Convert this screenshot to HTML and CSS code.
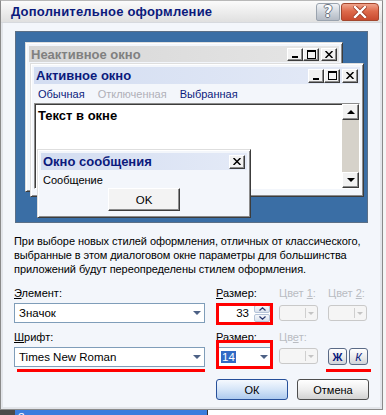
FILE: index.html
```html
<!DOCTYPE html>
<html lang="ru">
<head>
    <meta charset="UTF-8">
    <title>Дополнительное оформление</title>
    <link rel="stylesheet" href="styles.css">
</head>
<body>
    <div class="screen">
        <div class="dialog">
            <div class="titlebar">
                <span class="title">Дополнительное оформление</span>
                <div class="caption-btns">
                    <span class="cap-help">?</span>
                    <span class="cap-close">
                        <svg width="14" height="12" viewBox="0 0 14 12">
                            <path d="M2 1 L12 11 M12 1 L2 11" stroke="#9c3a25" stroke-width="4" stroke-linecap="square"/>
                            <path d="M2 1 L12 11 M12 1 L2 11" stroke="#fff" stroke-width="2.4" stroke-linecap="square"/>
                        </svg>
                    </span>
                </div>
            </div>

            <div class="content">
                <div class="preview">
                    <div class="win win-inactive">
                        <div class="wtitle">
                            <span>Неактивное окно</span>
                            <div class="wbtns">
                                <span class="cbtn"><svg width="8" height="8"><rect x="1" y="6" width="6" height="2" fill="#000"/></svg></span>
                                <span class="cbtn"><svg width="9" height="9"><rect x="0.5" y="0.5" width="8" height="8" fill="none" stroke="#000"/><rect x="0" y="1" width="9" height="1" fill="#000"/></svg></span>
                                <span class="cbtn close"><svg width="8" height="7"><path d="M0.5 0 L7.5 7 M7.5 0 L0.5 7" stroke="#000" stroke-width="1.5"/></svg></span>
                            </div>
                        </div>
                    </div>

                    <div class="win win-active">
                        <div class="wtitle">
                            <span>Активное окно</span>
                            <div class="wbtns">
                                <span class="cbtn"><svg width="8" height="8"><rect x="1" y="6" width="6" height="2" fill="#000"/></svg></span>
                                <span class="cbtn"><svg width="9" height="9"><rect x="0.5" y="0.5" width="8" height="8" fill="none" stroke="#000"/><rect x="0" y="1" width="9" height="1" fill="#000"/></svg></span>
                                <span class="cbtn close"><svg width="8" height="7"><path d="M0.5 0 L7.5 7 M7.5 0 L0.5 7" stroke="#000" stroke-width="1.5"/></svg></span>
                            </div>
                        </div>
                        <div class="menu">
                            <span>Обычная</span>
                            <span class="disabled">Отключенная</span>
                            <span>Выбранная</span>
                        </div>
                        <div class="client">
                            <div class="client-text">Текст в окне</div>
                            <div class="vscroll">
                                <span class="sbtn"><i class="tri up"></i></span>
                                <span class="track"></span>
                                <span class="sbtn"><i class="tri down"></i></span>
                            </div>
                        </div>
                    </div>

                    <div class="win win-msg">
                        <div class="wtitle">
                            <span>Окно сообщения</span>
                            <div class="wbtns">
                                <span class="cbtn close"><svg width="8" height="7"><path d="M0.5 0 L7.5 7 M7.5 0 L0.5 7" stroke="#000" stroke-width="1.5"/></svg></span>
                            </div>
                        </div>
                        <div class="msg-body">
                            <div class="msg-text">Сообщение</div>
                            <span class="classic-btn">OK</span>
                        </div>
                    </div>
                </div>

                <p class="note">
                    При выборе новых стилей оформления, отличных от классического,
                    выбранные в этом диалоговом окне параметры для большинства
                    приложений будут переопределены стилем оформления.
                </p>

                <div class="form">
                    <span class="lbl"><u>Э</u>лемент:</span>
                    <span class="lbl"><u>Р</u>азмер:</span>
                    <span class="lbl off">Цвет <u>1</u>:</span>
                    <span class="lbl off">Цвет <u>2</u>:</span>

                    <div class="combo wide">
                        <span class="combo-text">Значок</span>
                        <i class="arrow"></i>
                    </div>
                    <div class="spin">
                        <span class="spin-text">33</span>
                        <span class="spin-btns">
                            <span class="sp"><svg width="7" height="4"><path d="M0.5 3.5 L3.5 0.8 L6.5 3.5" fill="none" stroke="#27346c" stroke-width="1.2"/></svg></span>
                            <span class="sp"><svg width="7" height="4"><path d="M0.5 0.5 L3.5 3.2 L6.5 0.5" fill="none" stroke="#27346c" stroke-width="1.2"/></svg></span>
                        </span>
                        <span class="mark mark-spin"></span>
                    </div>
                    <div class="colorbtn row1"><i class="sep"></i><i class="arrow dim"></i></div>
                    <div class="colorbtn row1"><i class="sep"></i><i class="arrow dim"></i></div>

                    <span class="lbl"><u>Ш</u>рифт:</span>
                    <span class="lbl">Ра<u>з</u>мер:</span>
                    <span class="lbl off">Цв<u>е</u>т:</span>
                    <span></span>

                    <div class="combo wide">
                        <span class="combo-text">Times New Roman</span>
                        <i class="arrow"></i>
                        <span class="uline uline-font"></span>
                    </div>
                    <div class="combo size">
                        <span class="combo-text"><span class="selected">14</span></span>
                        <i class="arrow"></i>
                        <span class="mark mark-size"></span>
                    </div>
                    <div class="colorbtn row2"><i class="sep"></i><i class="arrow dim"></i></div>
                    <div class="style-btns">
                        <span class="sbtn-xp bold">Ж</span>
                        <span class="sbtn-xp italic">К</span>
                        <span class="uline uline-style"></span>
                    </div>
                </div>

                <div class="actions">
                    <span class="xp-btn default">ОК</span>
                    <span class="xp-btn">Отмена</span>
                </div>
            </div>
        </div>
        <div class="taskbar">
            <span class="task-item">Значок</span>
        </div>
    </div>
</body>
</html>
```

FILE: styles.css
```css
* {
    margin: 0;
    padding: 0;
    box-sizing: border-box;
}

body {
    font-family: "Liberation Sans", Arial, sans-serif;
    font-size: 11px;
    color: #000;
    background: #fff;
}

.screen {
    width: 386px;
    height: 415px;
    overflow: hidden;
    background: #f4f4f4;
}

/* dialog frame */
.dialog {
    width: 383px;
    height: 410px;
    background: #f3f6fb;
    border: 1px solid #8a8a8a;
    border-top-color: #b8b8b8;
    box-shadow: inset 2px 0 #e2e5ea, inset -2px 0 #e2e5ea, inset 0 -2px #e2e5ea;
}

.titlebar {
    height: 22px;
    display: flex;
    align-items: center;
    justify-content: space-between;
    padding: 0 3px 0 10px;
    background: linear-gradient(#fbfbfb, #ececec 55%, #e0e0e0);
    border-bottom: 1px solid #d6d9de;
}

.title {
    font-weight: bold;
    font-size: 13px;
    color: #0b1a7c;
    letter-spacing: 0.2px;
}

.caption-btns {
    display: flex;
    gap: 1px;
}

.cap-help {
    width: 24px;
    height: 18px;
    border: 1px solid #9aa3ae;
    border-radius: 3px 3px 2px 2px;
    background: linear-gradient(#f2f4f7, #c9cfd7 60%, #b4bbc5);
    color: #fff;
    font: bold 15px/16px "DejaVu Sans", sans-serif;
    text-align: center;
    text-shadow: 1px 0 #6c7480, -1px 0 #6c7480, 0 1px #6c7480, 0 -1px #6c7480;
}

.cap-close {
    width: 38px;
    height: 18px;
    border: 1px solid #a4472e;
    border-radius: 3px 4px 2px 2px;
    background: linear-gradient(#f0a48c, #de6a4b 45%, #c84a2e);
    display: flex;
    align-items: center;
    justify-content: center;
}

.content {
    padding: 8px 13px 0;
}

/* preview of windows */
.preview {
    position: relative;
    margin-left: 1px;
    width: 353px;
    height: 192px;
    background: #3a6ea5;
    border: 1px solid #5b6f86;
}

.win {
    position: absolute;
    background: #f3f6fb;
    border: 1px solid;
    border-color: #dedede #3c3c3c #3c3c3c #dedede;
    box-shadow: inset 1px 1px #fff, inset -1px -1px #8c8c8c;
    padding: 3px;
}

.win-inactive {
    left: 9px;
    top: 10px;
    width: 318px;
    height: 150px;
}

.win-active {
    left: 14px;
    top: 31px;
    width: 334px;
    height: 134px;
}

.win-msg {
    left: 21px;
    top: 117px;
    width: 214px;
    height: 69px;
}

.wtitle {
    display: flex;
    align-items: center;
    justify-content: space-between;
    height: 17px;
    padding: 0 2px 0 2px;
    font-weight: bold;
    font-size: 13px;
    color: #0b1a7c;
    background: linear-gradient(90deg, #d3ddf1, #e4eaf7);
}

.win-inactive .wtitle {
    height: 16px;
    color: #808080;
    background: linear-gradient(90deg, #d6d6d6, #e6e6e6);
}

.wbtns {
    display: flex;
}

.cbtn {
    width: 16px;
    height: 14px;
    display: flex;
    align-items: center;
    justify-content: center;
    background: #f2f2f2;
    border: 1px solid;
    border-color: #fff #3c3c3c #3c3c3c #fff;
    box-shadow: inset -1px -1px #8c8c8c;
}

.win-inactive .cbtn {
    height: 13px;
}

.cbtn.close {
    margin-left: 2px;
}

.menu {
    display: flex;
    gap: 13px;
    height: 19px;
    align-items: center;
    padding-left: 4px;
    color: #0b1a7c;
    font-size: 11px;
}

.menu .disabled {
    color: #b0b0b8;
}

.client {
    display: flex;
    height: 86px;
    background: #fff;
    border: 1px solid;
    border-color: #8c8c8c #fff #fff #8c8c8c;
    box-shadow: inset 1px 1px #3c3c3c;
}

.client-text {
    flex: 1;
    padding: 4px 0 0 3px;
    font-weight: bold;
    font-size: 13px;
}

.vscroll {
    width: 17px;
    display: flex;
    flex-direction: column;
    background: #d6d2ca;
}

.sbtn {
    height: 16px;
    display: flex;
    align-items: center;
    justify-content: center;
    background: #f2f2f2;
    border: 1px solid;
    border-color: #fff #3c3c3c #3c3c3c #fff;
    box-shadow: inset -1px -1px #8c8c8c;
}

.track {
    flex: 1;
}

.tri {
    width: 0;
    height: 0;
    border-left: 4px solid transparent;
    border-right: 4px solid transparent;
}

.tri.up {
    border-bottom: 4px solid #000;
}

.tri.down {
    border-top: 4px solid #000;
}

.msg-body {
    display: flex;
    flex-direction: column;
    align-items: center;
}

.msg-text {
    align-self: flex-start;
    padding: 4px 0 0 2px;
    height: 18px;
}

.classic-btn {
    width: 72px;
    height: 23px;
    display: flex;
    align-items: center;
    justify-content: center;
    font-size: 11.5px;
    background: #f3f3f3;
    border: 1px solid;
    border-color: #fff #3c3c3c #3c3c3c #fff;
    box-shadow: inset -1px -1px #8c8c8c;
}

.note {
    margin-top: 11px;
    line-height: 14px;
    font-size: 11px;
    letter-spacing: -0.07px;
}

/* form */
.form {
    margin-top: 11px;
    display: grid;
    grid-template-columns: 202px 63px 49px 1fr;
    grid-template-rows: 16px 28px 16px 20px;
    align-items: start;
}

.lbl {
    line-height: 13px;
}

.lbl.off {
    color: #b9bcc2;
}

.combo {
    position: relative;
    height: 20px;
    display: flex;
    align-items: center;
    background: #fff;
    border: 1px solid #7f9db9;
}

.combo.wide {
    width: 191px;
}

.combo.size {
    width: 56px;
}

.combo-text {
    flex: 1;
    padding-left: 4px;
    font-size: 11.5px;
}

.selected {
    background: #316ac5;
    color: #fff;
    padding: 0 1px;
}

.arrow {
    width: 0;
    height: 0;
    margin-right: 3px;
    border-left: 4px solid transparent;
    border-right: 4px solid transparent;
    border-top: 4px solid #4d6185;
}

.arrow.dim {
    margin: 0 3px 0 2px;
    border-left-width: 3px;
    border-right-width: 3px;
    border-top: 3px solid #c4c4c4;
}

.spin {
    position: relative;
    width: 56px;
    height: 20px;
    display: flex;
    align-items: center;
    background: #fff;
    border: 1px solid #7f9db9;
}

.spin-text {
    flex: 1;
    text-align: right;
    padding-right: 5px;
    font-size: 11.5px;
}

.spin-btns {
    display: flex;
    flex-direction: column;
    gap: 1px;
    margin-right: 1px;
}

.sp {
    width: 16px;
    height: 8px;
    display: flex;
    align-items: center;
    justify-content: center;
    border: 1px solid #b4c3d8;
    border-radius: 2px;
    background: linear-gradient(#f6f8fb, #d9e1ec);
}

.colorbtn {
    width: 39px;
    height: 16px;
    display: flex;
    align-items: center;
    justify-content: flex-end;
    border: 1px solid #c9c9c9;
    border-radius: 3px;
    background: #f5f5f5;
}

.colorbtn.row1 {
    margin-top: 2px;
}

.colorbtn.row2 {
    margin-top: 1px;
}

.sep {
    width: 1px;
    height: 10px;
    background: #cfcfcf;
}

.style-btns {
    position: relative;
    display: flex;
    gap: 2px;
    margin-top: 1px;
}

.sbtn-xp {
    width: 19px;
    height: 17px;
    display: flex;
    align-items: center;
    justify-content: center;
    border: 1px solid #5a6a86;
    border-radius: 3px;
    background: linear-gradient(#ffffff, #e9e9e9 60%, #cfd3da);
    color: #0b1a7c;
    font-size: 11px;
}

.sbtn-xp.bold {
    font-weight: bold;
}

.sbtn-xp.italic {
    font-style: italic;
}

/* red marks drawn over the fields */
.mark {
    position: absolute;
    border: 3px solid #f00;
}

.mark-spin {
    left: -1px;
    top: -1px;
    right: -2px;
    bottom: -3px;
}

.mark-size {
    left: -1px;
    top: -8px;
    right: -2px;
    bottom: -3px;
}

.uline {
    position: absolute;
    height: 3px;
    background: #f00;
}

.uline-font {
    left: 2px;
    right: -1px;
    top: 21px;
}

.uline-style {
    left: -2px;
    right: -2px;
    top: 21px;
}

.actions {
    margin-top: 12px;
    display: flex;
    justify-content: flex-end;
    gap: 9px;
}

.xp-btn {
    width: 72px;
    height: 21px;
    display: flex;
    align-items: center;
    justify-content: center;
    border: 1px solid #4e4e4e;
    border-radius: 3px;
    background: linear-gradient(#ffffff, #eeeeee 50%, #d2d2d2);
}

.xp-btn.default {
    border-color: #27509a;
    background: linear-gradient(#f5f9fe, #d5e5f8 50%, #adcaee);
}

/* strip of the window behind */
.taskbar {
    height: 5px;
    overflow: hidden;
    display: flex;
    background: #fff;
    border-left: 15px solid #4a4a4a;
}

.task-item {
    width: 193px;
    padding: 1px 0 0 3px;
    background: #3b7ddd;
    color: #fff;
    line-height: 13px;
    border-right: 1px solid #333;
}
```
